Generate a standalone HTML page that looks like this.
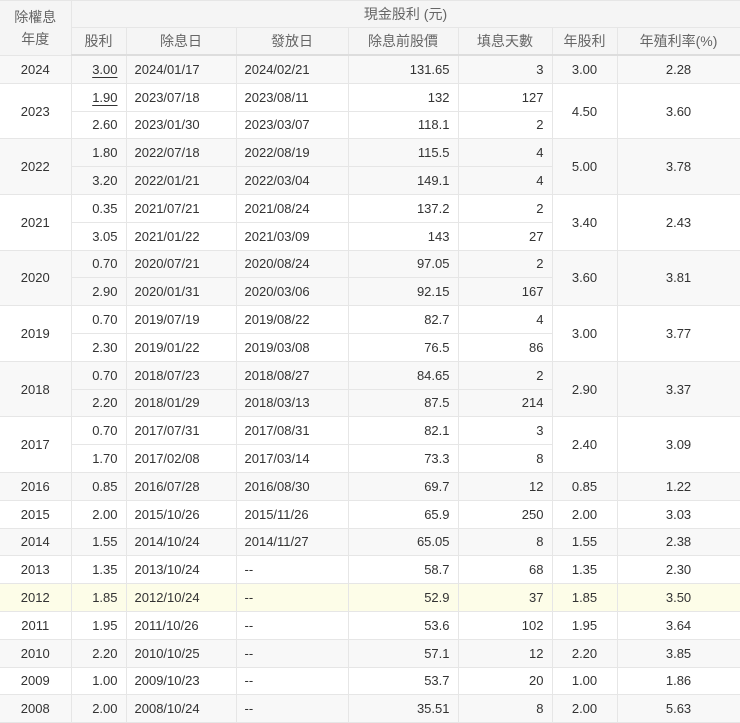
<!DOCTYPE html>
<html><head><meta charset="utf-8"><style>
body{margin:0;background:#fff;font-family:"Liberation Sans","Noto Sans CJK TC",sans-serif;font-size:13px;color:#333}
table{border-collapse:collapse;table-layout:fixed;width:740px}
td,th{border:1px solid #e6e6e6;padding:0 8px;white-space:nowrap;overflow:hidden}
th{background:#f5f5f5;color:#666;font-weight:normal;font-size:14px;height:26px}
thead tr:last-child th{border-bottom:2px solid #ddd}
tbody tr{height:27.8px}
td{height:26.8px}
.c{text-align:center}.r{text-align:right}.l{text-align:left}
.g td{background:#f8f8f8}
.y td{background:#fdfde8}
u{text-decoration:underline;text-underline-offset:3px}
table tr td:first-child,table tr th:first-child{border-left:none}
</style></head><body>
<table>
<colgroup><col style="width:71px"><col style="width:55px"><col style="width:110px"><col style="width:112px"><col style="width:110px"><col style="width:94px"><col style="width:65px"><col style="width:123px"></colgroup>
<thead>
<tr><th rowspan="2" style="line-height:22px">除權息<br>年度</th><th colspan="7">現金股利 (元)</th></tr>
<tr><th>股利</th><th>除息日</th><th>發放日</th><th>除息前股價</th><th>填息天數</th><th>年股利</th><th>年殖利率(%)</th></tr>
</thead>
<tbody>
<tr class="g"><td class="c">2024</td><td class="r"><u>3.00</u></td><td class="l">2024/01/17</td><td class="l">2024/02/21</td><td class="r">131.65</td><td class="r">3</td><td class="c">3.00</td><td class="c">2.28</td></tr>
<tr><td class="c" rowspan="2">2023</td><td class="r"><u>1.90</u></td><td>2023/07/18</td><td>2023/08/11</td><td class="r">132</td><td class="r">127</td><td class="c" rowspan="2">4.50</td><td class="c" rowspan="2">3.60</td></tr>
<tr><td class="r">2.60</td><td>2023/01/30</td><td>2023/03/07</td><td class="r">118.1</td><td class="r">2</td></tr>
<tr class="g"><td class="c" rowspan="2">2022</td><td class="r">1.80</td><td>2022/07/18</td><td>2022/08/19</td><td class="r">115.5</td><td class="r">4</td><td class="c" rowspan="2">5.00</td><td class="c" rowspan="2">3.78</td></tr>
<tr class="g"><td class="r">3.20</td><td>2022/01/21</td><td>2022/03/04</td><td class="r">149.1</td><td class="r">4</td></tr>
<tr><td class="c" rowspan="2">2021</td><td class="r">0.35</td><td>2021/07/21</td><td>2021/08/24</td><td class="r">137.2</td><td class="r">2</td><td class="c" rowspan="2">3.40</td><td class="c" rowspan="2">2.43</td></tr>
<tr><td class="r">3.05</td><td>2021/01/22</td><td>2021/03/09</td><td class="r">143</td><td class="r">27</td></tr>
<tr class="g"><td class="c" rowspan="2">2020</td><td class="r">0.70</td><td>2020/07/21</td><td>2020/08/24</td><td class="r">97.05</td><td class="r">2</td><td class="c" rowspan="2">3.60</td><td class="c" rowspan="2">3.81</td></tr>
<tr class="g"><td class="r">2.90</td><td>2020/01/31</td><td>2020/03/06</td><td class="r">92.15</td><td class="r">167</td></tr>
<tr><td class="c" rowspan="2">2019</td><td class="r">0.70</td><td>2019/07/19</td><td>2019/08/22</td><td class="r">82.7</td><td class="r">4</td><td class="c" rowspan="2">3.00</td><td class="c" rowspan="2">3.77</td></tr>
<tr><td class="r">2.30</td><td>2019/01/22</td><td>2019/03/08</td><td class="r">76.5</td><td class="r">86</td></tr>
<tr class="g"><td class="c" rowspan="2">2018</td><td class="r">0.70</td><td>2018/07/23</td><td>2018/08/27</td><td class="r">84.65</td><td class="r">2</td><td class="c" rowspan="2">2.90</td><td class="c" rowspan="2">3.37</td></tr>
<tr class="g"><td class="r">2.20</td><td>2018/01/29</td><td>2018/03/13</td><td class="r">87.5</td><td class="r">214</td></tr>
<tr><td class="c" rowspan="2">2017</td><td class="r">0.70</td><td>2017/07/31</td><td>2017/08/31</td><td class="r">82.1</td><td class="r">3</td><td class="c" rowspan="2">2.40</td><td class="c" rowspan="2">3.09</td></tr>
<tr><td class="r">1.70</td><td>2017/02/08</td><td>2017/03/14</td><td class="r">73.3</td><td class="r">8</td></tr>
<tr class="g"><td class="c">2016</td><td class="r">0.85</td><td>2016/07/28</td><td>2016/08/30</td><td class="r">69.7</td><td class="r">12</td><td class="c">0.85</td><td class="c">1.22</td></tr>
<tr><td class="c">2015</td><td class="r">2.00</td><td>2015/10/26</td><td>2015/11/26</td><td class="r">65.9</td><td class="r">250</td><td class="c">2.00</td><td class="c">3.03</td></tr>
<tr class="g"><td class="c">2014</td><td class="r">1.55</td><td>2014/10/24</td><td>2014/11/27</td><td class="r">65.05</td><td class="r">8</td><td class="c">1.55</td><td class="c">2.38</td></tr>
<tr><td class="c">2013</td><td class="r">1.35</td><td>2013/10/24</td><td>--</td><td class="r">58.7</td><td class="r">68</td><td class="c">1.35</td><td class="c">2.30</td></tr>
<tr class="y"><td class="c">2012</td><td class="r">1.85</td><td>2012/10/24</td><td>--</td><td class="r">52.9</td><td class="r">37</td><td class="c">1.85</td><td class="c">3.50</td></tr>
<tr><td class="c">2011</td><td class="r">1.95</td><td>2011/10/26</td><td>--</td><td class="r">53.6</td><td class="r">102</td><td class="c">1.95</td><td class="c">3.64</td></tr>
<tr class="g"><td class="c">2010</td><td class="r">2.20</td><td>2010/10/25</td><td>--</td><td class="r">57.1</td><td class="r">12</td><td class="c">2.20</td><td class="c">3.85</td></tr>
<tr><td class="c">2009</td><td class="r">1.00</td><td>2009/10/23</td><td>--</td><td class="r">53.7</td><td class="r">20</td><td class="c">1.00</td><td class="c">1.86</td></tr>
<tr class="g"><td class="c">2008</td><td class="r">2.00</td><td>2008/10/24</td><td>--</td><td class="r">35.51</td><td class="r">8</td><td class="c">2.00</td><td class="c">5.63</td></tr>
</tbody></table>
</body></html>
